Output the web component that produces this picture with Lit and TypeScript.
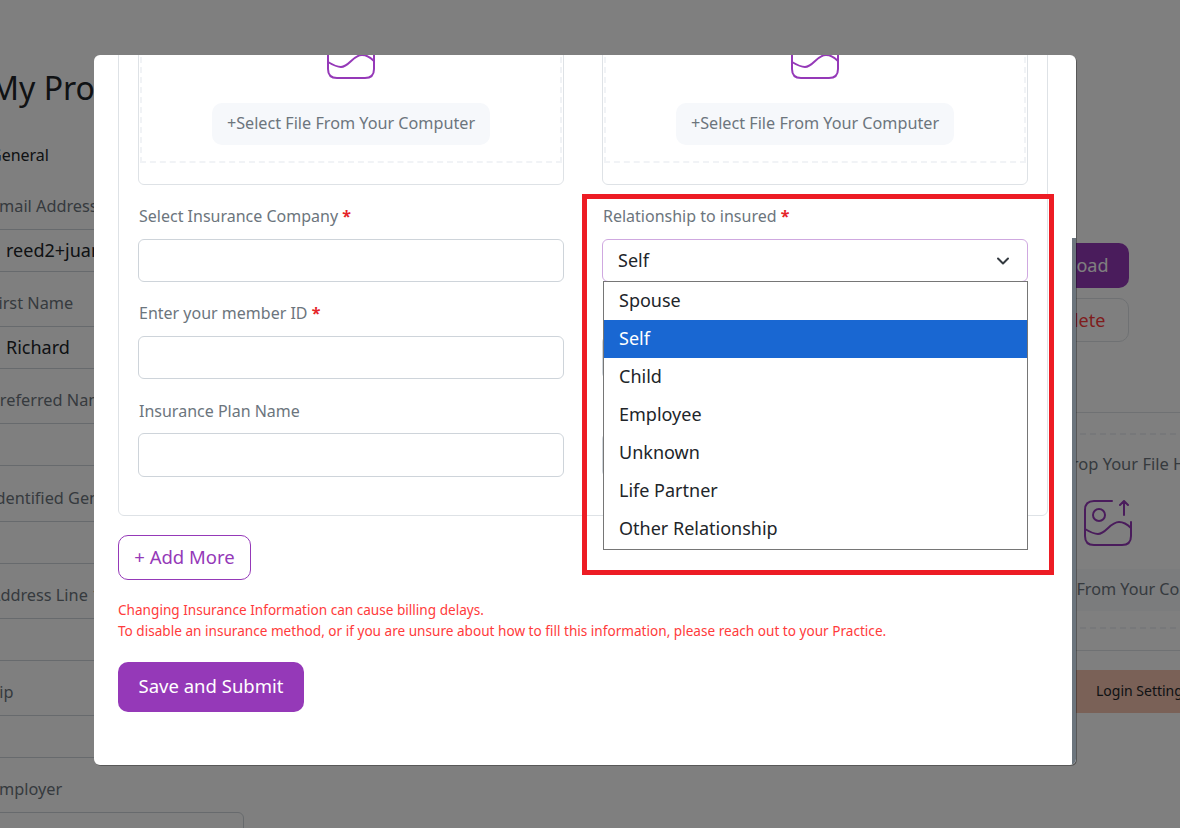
import { LitElement, css, html } from "lit";
import { customElement } from "lit/decorators.js";

const bgFields = [
  { label: "Email Address", value: "reed2+juan@example.com" },
  { label: "First Name", value: "Richard" },
  { label: "Preferred Name", value: "" },
  { label: "Identified Gender", value: "" },
  { label: "Address Line 1", value: "" },
  { label: "Zip", value: "" },
  { label: "Employer", value: "" },
];

const relationships = ["Spouse", "Self", "Child", "Employee", "Unknown", "Life Partner", "Other Relationship"];

const imageIcon = html`<svg class="image-icon" viewBox="0 0 48 46" fill="none" stroke="currentColor" stroke-width="2" stroke-linecap="round" stroke-linejoin="round">
  <path d="M28 1H10Q1 1 1 10V36Q1 45 10 45H38Q47 45 47 36V22" />
  <circle cx="15" cy="15" r="6" />
  <path d="M1 29C6 32 10 34 14 34C22 34 26 22 35 22C40 22 44 25 47 28" />
  <path d="M40 15V1M36 5L40 1L44 5" />
</svg>`;

@customElement("app-root")
export class AppRoot extends LitElement {
  static styles = css`
    :host {
      display: block;
      position: relative;
      width: 1180px;
      height: 828px;
      overflow: hidden;
      background: #fff;
      font-family: "Noto Sans", sans-serif;
      font-size: 16px;
      color: #212529;
    }
    * {
      box-sizing: border-box;
    }

    /* page behind the modal */
    .page {
      display: flex;
      margin-left: -11px;
      width: 1400px;
    }
    .left {
      width: 255px;
      flex: none;
    }
    .page-title {
      margin: 66px 0 0 1px;
      font-size: 32px;
      line-height: 44px;
      font-weight: 400;
    }
    .section {
      margin: 34px 0 0 1px;
      line-height: 22px;
      color: #212529;
    }
    .bg-field {
      margin-top: 20.2px;
    }
    .section + .bg-field {
      margin-top: 29px;
    }
    .bg-field label {
      display: block;
      margin-left: 1px;
      margin-bottom: 12px;
      font-size: 16.3px;
      line-height: 22px;
      color: #6c757d;
      white-space: nowrap;
    }
    .bg-input {
      height: 43px;
      padding-left: 16px;
      border: 1px solid #ced4da;
      border-radius: 6px;
      font-size: 18px;
      line-height: 41px;
      white-space: nowrap;
      overflow: hidden;
    }
    .right {
      width: 296px;
      margin-left: 716px;
      padding-top: 243px;
      flex: none;
    }
    .bg-btn {
      margin-left: 67px;
      width: 102px;
      height: 45px;
      border-radius: 10px;
      background: #9539b8;
      color: #fff;
      font-size: 18px;
      line-height: 45px;
      text-align: center;
    }
    .bg-btn.outline {
      margin-top: 10px;
      height: 44px;
      line-height: 42px;
      background: #fff;
      border: 1px solid #dee2e6;
      color: #ff3b3b;
    }
    .bg-line {
      margin-top: 70px;
      border-top: 1px solid #dee2e6;
    }
    .bg-drop {
      margin-top: 20px;
      height: 196px;
      padding-top: 17px;
      display: flex;
      flex-direction: column;
      align-items: center;
      border-top: 2px dashed #eef0f4;
      border-bottom: 2px dashed #eef0f4;
      color: #6c757d;
    }
    .bg-drop span {
      margin-right: 22px;
      font-size: 16.5px;
      white-space: nowrap;
      line-height: 24px;
    }
    .bg-drop .image-icon {
      margin-top: 24px;
      color: #9539b8;
    }
    .bg-drop .pick {
      margin: 23px 0 0 8px;
    }
    .bg-line.low {
      margin-top: 21px;
    }
    .bg-tab {
      margin-top: 19px;
      height: 43px;
      padding-left: 136px;
      background: #f4c2ae;
      font-size: 14px;
      line-height: 41px;
      color: #212529;
      white-space: nowrap;
    }

    .overlay {
      position: absolute;
      inset: 0;
      background: rgba(0, 0, 0, 0.5);
    }

    /* modal, scrolled so the top of the form is cut off */
    .modal {
      position: absolute;
      left: 94px;
      top: 55px;
      width: 982px;
      height: 710px;
      overflow: hidden;
      background: #fff;
      border-radius: 6px;
      box-shadow: 1px 1px 0 rgba(0, 0, 0, 0.3);
    }
    .scroll {
      margin-top: -60px;
      padding: 0 28px 0 24px;
    }
    .thumb {
      position: absolute;
      right: 0;
      top: 183px;
      bottom: 0;
      width: 4px;
      background: #6c757d;
    }
    .insurance {
      padding: 0 19px 38px;
      border: 1px solid #dee2e6;
      border-radius: 6px;
      display: grid;
      grid-template-columns: 426px 426px;
      column-gap: 38px;
      width: 930px;
    }
    .col {
      padding-top: 19px;
    }
    .upload {
      height: 170px;
      padding: 1px;
      border: 1px solid #dee2e6;
      border-radius: 6px;
    }
    .drop {
      height: 146px;
      padding-top: 16px;
      display: flex;
      flex-direction: column;
      align-items: center;
      border: 2px dashed #f1f3f6;
      border-top: none;
      color: #9539b8;
    }
    .image-icon {
      width: 48px;
      height: 46px;
      flex: none;
      display: block;
    }
    .pick {
      width: 278px;
      height: 42px;
      flex: none;
      margin-top: 24px;
      border-radius: 10px;
      background: #f6f8fb;
      color: #6c757d;
      font-size: 16.2px;
      line-height: 40px;
      text-align: center;
      white-space: nowrap;
    }
    .field {
      position: relative;
      margin-top: 19px;
    }
    .field label {
      display: block;
      height: 24px;
      margin-bottom: 11px;
      padding-left: 1px;
      line-height: 25px;
      font-size: 16px;
      color: #6c757d;
      white-space: nowrap;
    }
    .field:last-child label {
      line-height: 26px;
    }
    .field label b {
      color: #e5252a;
      font-weight: 700;
    }
    .input {
      height: 43px;
      border: 1px solid #ced4da;
      border-radius: 6px;
      background: #fff;
    }
    .field:last-child .input {
      height: 44px;
    }
    .select {
      display: flex;
      align-items: center;
      justify-content: space-between;
      padding: 0 16px 2px 15px;
      border-color: #cfa8e0;
      font-size: 18px;
      color: #212529;
    }
    .select svg {
      width: 16px;
      height: 16px;
      margin-top: 3px;
    }
    .options {
      position: absolute;
      left: 1px;
      right: 0;
      top: 77px;
      z-index: 1;
      height: 269px;
      background: #fff;
      border: 1px solid #767676;
      font-size: 18px;
    }
    .option {
      height: 38px;
      padding-left: 15px;
      line-height: 36px;
      color: #212529;
    }
    .option.active {
      background: #1967d2;
      color: #fff;
    }
    .add {
      width: 133px;
      height: 45px;
      margin-top: 19px;
      border: 1px solid #9539b8;
      border-radius: 10px;
      color: #9539b8;
      font-size: 18.5px;
      line-height: 41px;
      text-align: center;
    }
    .warning {
      margin-top: 19px;
      font-size: 13.6px;
      line-height: 21px;
      color: #ff3b3b;
    }
    .save {
      width: 186px;
      height: 50px;
      margin-top: 21px;
      border-radius: 10px;
      background: #9539b8;
      color: #fff;
      font-size: 18.5px;
      line-height: 48px;
      text-align: center;
    }

    /* red annotation frame drawn over the screenshot */
    .callout {
      position: absolute;
      left: 582px;
      top: 194px;
      width: 472px;
      height: 381px;
      border: 5px solid #ed1c24;
    }
  `;

  renderUpload() {
    return html`<div class="upload">
      <div class="drop">${imageIcon}<div class="pick">+Select File From Your Computer</div></div>
    </div>`;
  }

  render() {
    const chevron = html`<svg viewBox="0 0 16 16" fill="none" stroke="#343a40" stroke-width="2" stroke-linecap="round" stroke-linejoin="round"><path d="m3 5.5 5 5 5-5" /></svg>`;
    return html`
      <div class="page">
        <div class="left">
          <h1 class="page-title">My Profile</h1>
          <div class="section">General</div>
          ${bgFields.map(
            (f) => html`<div class="bg-field">
              <label>${f.label}</label>
              <div class="bg-input">${f.value}</div>
            </div>`
          )}
        </div>
        <div class="right">
          <div class="bg-btn">Upload</div>
          <div class="bg-btn outline">Delete</div>
          <div class="bg-line"></div>
          <div class="bg-drop">
            <span>Drag and Drop Your File Here</span>
            ${imageIcon}
            <div class="pick">+Select File From Your Computer</div>
          </div>
          <div class="bg-line low"></div>
          <div class="bg-tab">Login Settings</div>
        </div>
      </div>
      <div class="overlay"></div>
      <div class="modal">
        <div class="scroll">
          <div class="insurance">
            <div class="col">
              ${this.renderUpload()}
              <div class="field">
                <label>Select Insurance Company <b>*</b></label>
                <div class="input"></div>
              </div>
              <div class="field">
                <label>Enter your member ID <b>*</b></label>
                <div class="input"></div>
              </div>
              <div class="field">
                <label>Insurance Plan Name</label>
                <div class="input"></div>
              </div>
            </div>
            <div class="col">
              ${this.renderUpload()}
              <div class="field">
                <label>Relationship to insured <b>*</b></label>
                <div class="input select">Self ${chevron}</div>
                <div class="options">
                  ${relationships.map(
                    (r) => html`<div class="option ${r === "Self" ? "active" : ""}">${r}</div>`
                  )}
                </div>
              </div>
              <div class="field">
                <label>&nbsp;</label>
                <div class="input"></div>
              </div>
              <div class="field">
                <label>&nbsp;</label>
                <div class="input"></div>
              </div>
            </div>
          </div>
          <div class="add">+ Add More</div>
          <div class="warning">
            Changing Insurance Information can cause billing delays.<br />
            To disable an insurance method, or if you are unsure about how to fill this information, please reach out to your Practice.
          </div>
          <div class="save">Save and Submit</div>
        </div>
        <div class="thumb"></div>
      </div>
      <div class="callout"></div>
    `;
  }
}

declare global {
  interface HTMLElementTagNameMap {
    "app-root": AppRoot;
  }
}
